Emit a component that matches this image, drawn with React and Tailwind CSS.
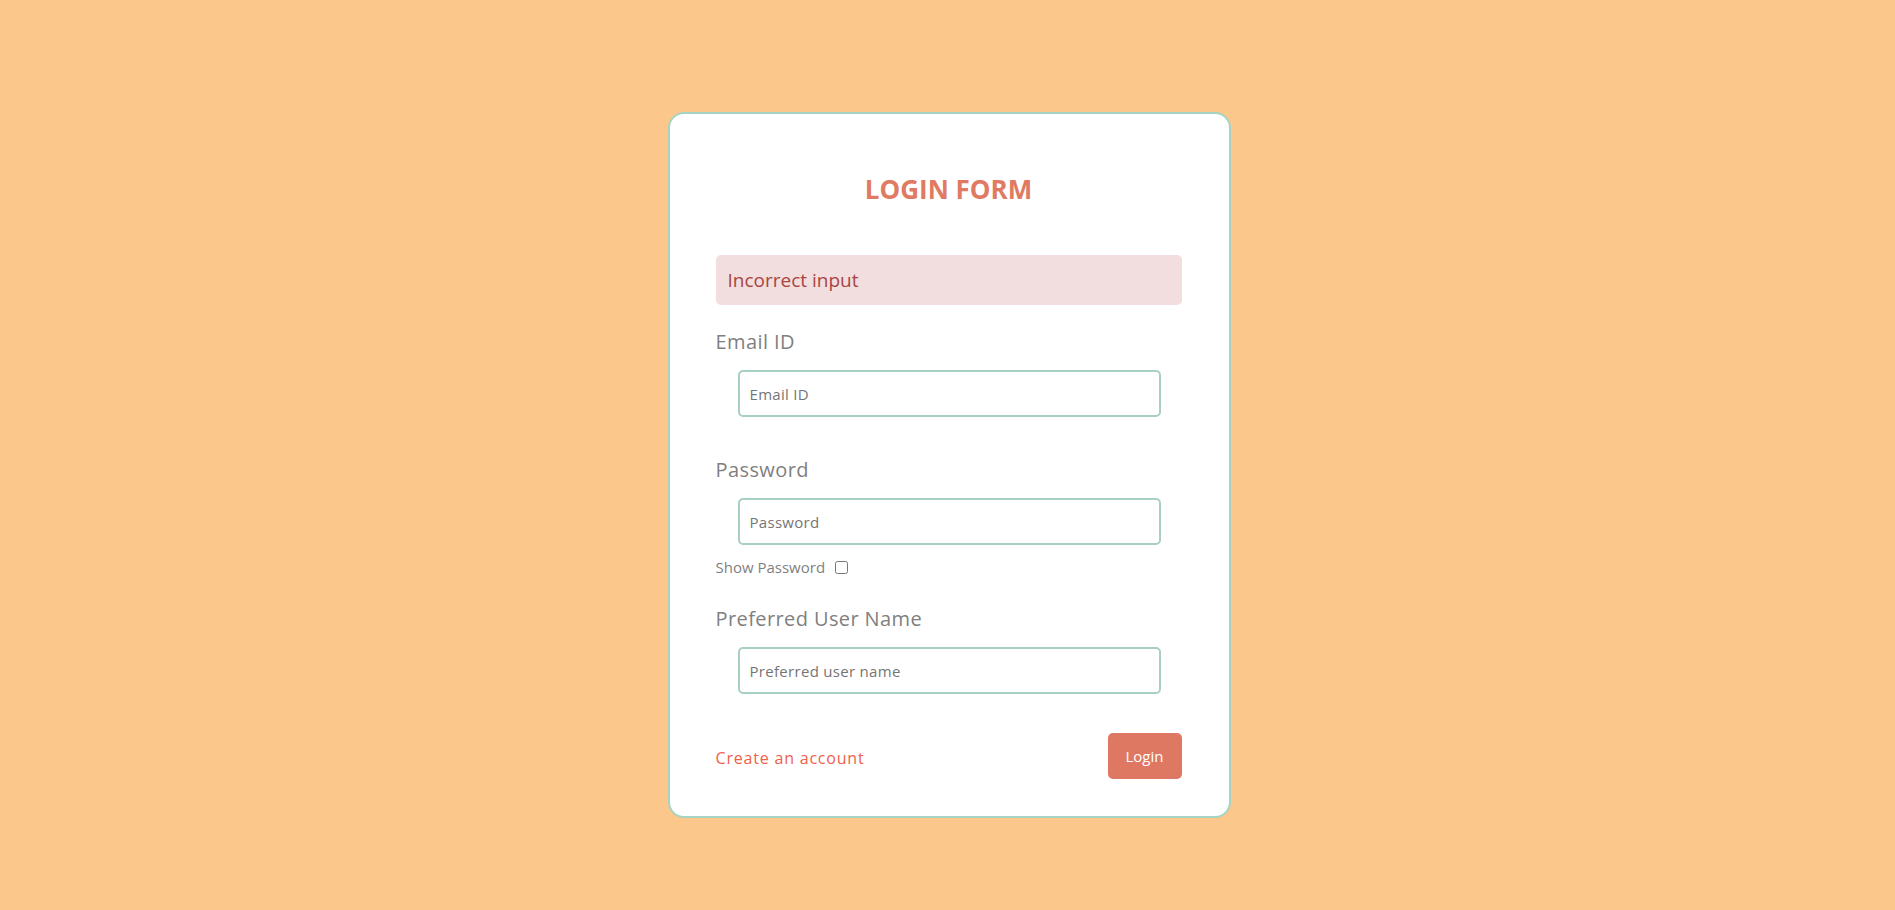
import { useState } from "react";

const FONT = { fontFamily: '"Open Sans", "Noto Sans", sans-serif' };

function Field({ label, placeholder, type = "text", className = "" }) {
  return (
    <div className={className}>
      <label className="block text-[20px] leading-[28px] tracking-[0.4px] text-[#7f7f7f]">{label}</label>
      <input
        type={type}
        placeholder={placeholder}
        className="mt-[14px] mx-[22px] block w-[423px] h-[47px] rounded-[5px] border-2 border-[#a7d0c1] px-[10px] text-[15px] tracking-[0.3px] text-gray-700 placeholder:text-[#757575] outline-none"
      />
    </div>
  );
}

export default function App() {
  const [showPassword, setShowPassword] = useState(false);

  return (
    <div className="min-h-[910px] bg-[#fcc78a] flex justify-center pl-[3px] pt-[112px]" style={FONT}>
      <div className="w-[563px] h-[706px] self-start bg-white border-2 border-[#a5d3c4] rounded-2xl pl-[46px] pr-[47px] pt-[55px]">
        <h1 className="text-center text-[26px] leading-[40px] font-bold text-[#e07a62]">LOGIN FORM</h1>

        <div className="mt-[46px] h-[50px] flex items-center px-3 rounded-[5px] bg-[#f2dede] text-[19px] text-[#a94442]">
          Incorrect input
        </div>

        <Field label="Email ID" placeholder="Email ID" className="mt-[23px]" />
        <Field label="Password" placeholder="Password" type={showPassword ? "text" : "password"} className="mt-[39px]" />

        <label className="mt-[12px] flex items-center gap-[10px] text-[15px] leading-[20px] text-[#7f7f7f]">
          Show Password
          <input
            type="checkbox"
            checked={showPassword}
            onChange={(e) => setShowPassword(e.target.checked)}
            className="w-[13px] h-[13px]"
          />
        </label>

        <Field label="Preferred User Name" placeholder="Preferred user name" className="mt-[28px]" />

        <div className="mt-[39px] flex items-center justify-between">
          <a href="#" className="pt-[4px] text-[16px] tracking-[0.8px] text-[#ef5f4c]">Create an account</a>
          <button className="w-[74px] h-[46px] rounded-[5px] bg-[#df7863] text-white text-[15px]">Login</button>
        </div>
      </div>
    </div>
  );
}
